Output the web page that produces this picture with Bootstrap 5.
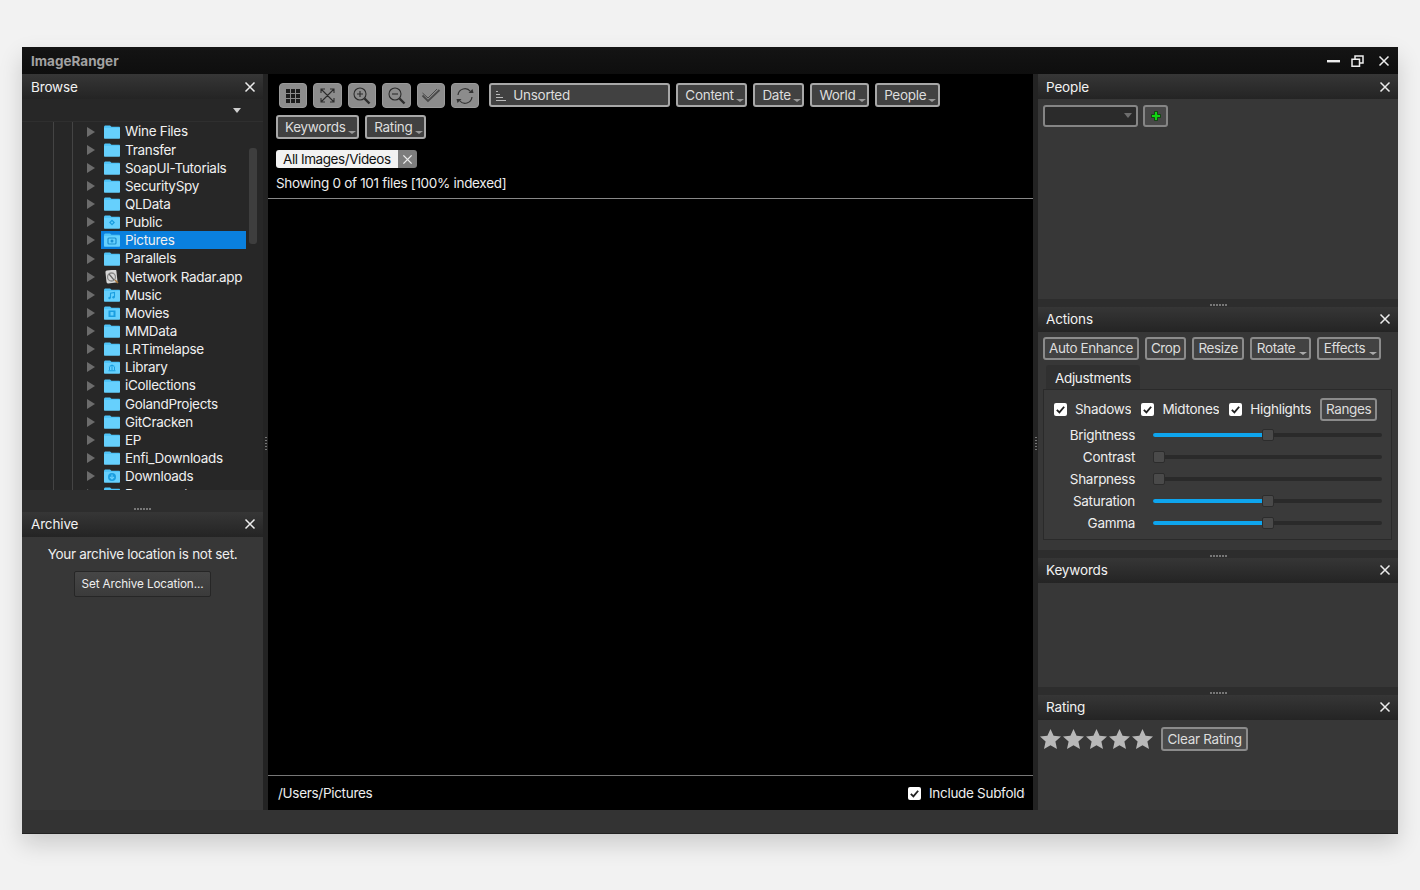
<!DOCTYPE html>
<html lang="en">
<head>
<meta charset="utf-8">
<title>ImageRanger</title>
<link href="https://cdn.jsdelivr.net/npm/bootstrap@5.3.0/dist/css/bootstrap.min.css" rel="stylesheet">
<style>
html,body{height:100%}
body{background:#f2f2f2;margin:0;padding:47px 22px 0;font-family:Inter,"Liberation Sans",sans-serif;font-size:13.5px;color:#eee;overflow:hidden;letter-spacing:-.3px}
.icon-defs{position:absolute}
.app-win{width:1376px;height:787px;background:#000;box-shadow:0 10px 22px rgba(0,0,0,.16);display:flex;flex-direction:column}
.title-bar{height:27px;flex:none;background:linear-gradient(#141414,#0e0e0e);display:flex;align-items:center;padding:1px 8px 0 9px;color:#a2a2a2;font-weight:700;font-size:13.5px;letter-spacing:0}
.win-btns{display:flex;gap:14px;align-items:center}
.win-min{margin-right:-3px}
.app-main{height:736px;flex:none;display:flex}
.side-l{width:241px;flex:none;display:flex;flex-direction:column;background:#2b2b2b}
.gut{width:5px;flex:none;background:#232323;display:flex;align-items:center;justify-content:center;padding-top:4px}
.gut-dots{width:2px;height:14px;background:repeating-linear-gradient(#777 0 1px,transparent 1px 3px)}
.center-col{width:765px;flex:none;background:#000;display:flex;flex-direction:column}
.side-r{width:360px;flex:none;display:flex;flex-direction:column;background:#2b2b2b}
.pan-head{height:25px;flex:none;background:linear-gradient(#363636,#242424);display:flex;align-items:center;justify-content:space-between;padding:1px 7px 0 9px;font-size:13.5px;color:#f2f2f2;letter-spacing:-.15px}
.pan-head-up{padding-top:0;padding-bottom:1px}
.side-r .pan-head{padding-left:8px}
.pan-body{background:#373737}
.split{height:8px;flex:none;display:flex;align-items:center;justify-content:center;background:#2d2d2d;padding-top:4px}
.split-left{height:7px;padding-top:0}
.split-dots{width:17px;height:2px;background:repeating-linear-gradient(90deg,#777 0 2px,transparent 2px 3px)}
.tree-top{height:23px;flex:none;background:#272727;border-bottom:1px solid #2f2f2f;display:flex;justify-content:flex-end;align-items:center;padding-right:22px}
.tree-wrap{height:368px;flex:none;overflow:hidden;position:relative;background:#272727}
.tree-rows{padding:.5px 0 0 65px;background:linear-gradient(#444,#444) 31px 0/1px 100% no-repeat,linear-gradient(#444,#444) 50px 0/1px 100% no-repeat}
.t-row{height:18.15px;display:flex;align-items:center;color:#f0f0f0;font-size:13.5px;white-space:nowrap;margin-right:17px}
.t-arrow{width:0;height:0;border-left:8px solid #6c6c6c;border-top:5px solid transparent;border-bottom:5px solid transparent;margin-right:9px;flex:none}
.t-icon{width:16px;height:14px;flex:none;margin-right:5px}
.t-name{display:flex;align-items:center;flex:1;height:18px;padding-left:3px;margin-left:-3px}
.t-sel{background:#0a80de}
.v-scroll{position:absolute;right:6px;top:26px;width:8px;height:96px;background:#3e3e3e;border-radius:3px}
.tree-foot{height:15px;flex:none;background:#2d2d2d}
.archive-body{flex:1;text-align:center;padding-top:8px;font-size:13.5px}
.archive-msg{line-height:18px;margin-bottom:8px}
.arch-btn{width:137px;height:26px;padding:0;font-size:11.7px;color:#eee;background:linear-gradient(#464646,#3b3b3b);border:1px solid #262626;border-radius:2px;line-height:24px;letter-spacing:-.1px}
.tool-row{display:flex;gap:6px;height:24px}
.tool-first{padding-left:3px}
.ico-btn{width:28.4px;height:25px;padding:0;background:#8c8c8c;border:1px solid #9b9b9b;border-radius:4px;display:flex;align-items:center;justify-content:center}
.fl-btn{height:24px;padding:0 11.7px 0 7px;position:relative;background:#414141;border:2px solid #a8a8a8;border-radius:3px;color:#ddd;font-size:13.5px;line-height:20px;white-space:nowrap;letter-spacing:-.3px}
.fl-btn::after{content:"";position:absolute;right:1.500px;bottom:3px;border-left:4px solid transparent;border-right:4px solid transparent;border-top:3.5px solid #9a9a9a}
.sort-box{width:181px;height:24px;padding:0 0 0 5px;margin-left:4px;background:#414141;border:2px solid #a8a8a8;border-radius:3px;display:flex;align-items:center;gap:7px;color:#ddd;font-size:13.5px}
.tag-pill{width:141px;height:18px;display:flex;border-radius:3px;overflow:hidden;font-size:13.5px;line-height:19px;margin-top:11px}
.tag-lab{width:122px;background:#f2f2f2;color:#111;padding-left:7px;white-space:nowrap;letter-spacing:-.42px}
.tag-x{width:19px;background:#7d7d7d;display:flex;align-items:center;justify-content:center}
.status-line{line-height:18px;margin-top:6px}
.view-top{height:125px;flex:none;border-bottom:1px solid #888;padding:9px 0 0 8px}
.view-main{flex:1}
.view-foot{height:35px;flex:none;border-top:1px solid #777;display:flex;align-items:center;justify-content:space-between;padding:0 8px 0 10px}
.ck-label{display:flex;align-items:center;gap:8px;white-space:nowrap;overflow:hidden}
.form-check-input.ck-box{width:13px;height:13px;margin:0;flex:none;border-radius:2px;background-color:#fff;border:0;background-size:11px;opacity:1;background-image:url("data:image/svg+xml,%3csvg xmlns='http://www.w3.org/2000/svg' viewBox='0 0 12 12'%3e%3cpath fill='none' stroke='%23222' stroke-width='2' d='M2 6.5l2.8 2.7L10 3'/%3e%3c/svg%3e")}
.sub-clip{width:96px;overflow:hidden;white-space:nowrap;display:block}
.act-row{display:flex;gap:6px}
.act-btn{height:23px;padding:0 4px;position:relative;background:#424242;border:2px solid #8b8b8b;border-radius:3px;color:#ddd;font-size:13.5px;line-height:19px;white-space:nowrap;letter-spacing:-.4px}
.act-drop{padding-right:13.5px;padding-left:5px}
.act-drop::after{content:"";position:absolute;right:2px;bottom:3px;border-left:4px solid transparent;border-right:4px solid transparent;border-top:3.5px solid #aaa}
.ppl-body{height:200px;padding:6px 5px;display:flex;gap:5px;align-items:flex-start}
.ppl-sel{width:95px;height:22px;background:#2b2b2b;border:2px solid #858585;border-radius:3px;position:relative}
.ppl-sel::after{content:"";position:absolute;right:4px;top:6px;border-left:4px solid transparent;border-right:4px solid transparent;border-top:5px solid #6e6e6e}
.add-btn{width:25px;height:22px;padding:0;background:#484848;border:2px solid #858585;border-radius:3px;display:flex;align-items:center;justify-content:center}
.actions-body{height:218px;padding:5px 0 0 5px}
.adj-tab{width:94px;height:25px;margin:5px 0 0 3px;background:#303030;border-radius:3px 3px 0 0;display:flex;align-items:center;justify-content:center;font-size:13.5px;color:#f2f2f2;padding-top:1px}
.adj-box{height:151px;margin:-1px 6px 0 0;background:#3a3a3a;border:1px solid #2a2a2a;padding:7px 0 0 10px}
.ck-row{display:flex;align-items:center;height:24px;gap:10px;margin-bottom:3px}
.range-btn{margin-left:-1px}
.sl-row{height:22px;display:flex;align-items:center}
.sl-lab{width:81px;text-align:right;flex:none;margin-right:18px;line-height:22px}
.sl-track{width:229px;height:4px;background:#2a2a2a;border-radius:2px;position:relative}
.sl-fill{height:4px;background:#0ea5ee;border-radius:2px}
.sl-thumb{position:absolute;top:-4px;width:12px;height:12px;background:#4a4a4a;border:1px solid #2c2c2c;border-radius:2px}
.kw-body{height:104px}
.rate-body{flex:1;display:flex;align-items:flex-start;padding:7px 0 0 2px}
.rate-stars{margin:2px 0 0 0;flex:none}
.clear-btn{height:24px;padding:0 4px 0 4.500px;margin-left:8px;background:#4a4a4a;border:2px solid #8b8b8b;border-radius:3px;color:#ddd;font-size:13.5px;line-height:20px;white-space:nowrap;letter-spacing:-.3px}
.status-strip{flex:1;background:#333;border-bottom:1px solid #222}
</style>
</head>
<body>
<svg width="0" height="0" class="icon-defs">
<defs>
<symbol id="fld" viewBox="0 0 16 14"><path fill="#4fc4f8" d="M0 2.2C0 1 .6.4 1.6.4h4c.8 0 1.1.7 1.800 1.300H15c.6 0 1 .4 1 1v1H0z"/><path fill="#66d0fd" d="M0 3h16v9.800c0 .6-.4 1-1 1H1c-.6 0-1-.4-1-1z"/></symbol>
<symbol id="xx" viewBox="0 0 12 12"><path stroke="#ececec" stroke-width="1.5" d="M1.500 1.500l9 9M10.500 1.500l-9 9"/></symbol>
<symbol id="star" viewBox="0 0 21 20"><path fill="#b8b8b8" d="M10.500 0l3.100 6.800 7.400.8-5.600 5 1.600 7.400-6.500-3.800L4 20l1.600-7.400-5.600-5 7.400-.8z"/></symbol>
</defs>
</svg>
<div class="app-win">
  <div class="title-bar justify-content-between">
    <span>ImageRanger</span>
    <div class="win-btns">
      <svg class="win-min" width="13" height="12" viewBox="0 0 13 12"><rect x="0" y="5" width="13" height="2.4" fill="#eee"/></svg>
      <svg width="13" height="12" viewBox="0 0 13 12"><path fill="none" stroke="#eee" stroke-width="1.5" d="M1 4.200h7.500v7H1zM4 4V1h8v7H8.500"/></svg>
      <svg width="12" height="12"><use href="#xx"/></svg>
    </div>
  </div>
  <div class="app-main">
    <div class="side-l">
      <div class="pan-head"><span>Browse</span><svg width="12" height="12"><use href="#xx"/></svg></div>
      <div class="tree-top"><svg width="8" height="5" viewBox="0 0 8 5"><path d="M0 0h8L4 5z" fill="#cfcfcf"/></svg></div>
      <div class="tree-wrap">
        <div class="tree-rows">
          <div class="t-row"><i class="t-arrow"></i><svg class="t-icon"><use href="#fld"/></svg><span class="t-name">Wine Files</span></div>
          <div class="t-row"><i class="t-arrow"></i><svg class="t-icon"><use href="#fld"/></svg><span class="t-name">Transfer</span></div>
          <div class="t-row"><i class="t-arrow"></i><svg class="t-icon"><use href="#fld"/></svg><span class="t-name">SoapUI-Tutorials</span></div>
          <div class="t-row"><i class="t-arrow"></i><svg class="t-icon"><use href="#fld"/></svg><span class="t-name">SecuritySpy</span></div>
          <div class="t-row"><i class="t-arrow"></i><svg class="t-icon"><use href="#fld"/></svg><span class="t-name">QLData</span></div>
          <div class="t-row"><i class="t-arrow"></i><svg class="t-icon" viewBox="0 0 16 14"><use href="#fld" width="16" height="14"/><path d="M8 4.500l3 3-3 3-3-3z" fill="#1a9ee0"/><circle cx="8" cy="7.500" r="1" fill="#66d0fd"/></svg><span class="t-name">Public</span></div>
          <div class="t-row"><i class="t-arrow"></i><div class="t-name t-sel"><svg class="t-icon" viewBox="0 0 16 14"><use href="#fld" width="16" height="14"/><rect x="4" y="5" width="8" height="6" rx="1" fill="none" stroke="#1a8fd0" stroke-width="1.2"/><circle cx="8" cy="8" r="1.500" fill="#1a8fd0"/></svg><span>Pictures</span></div></div>
          <div class="t-row"><i class="t-arrow"></i><svg class="t-icon"><use href="#fld"/></svg><span class="t-name">Parallels</span></div>
          <div class="t-row"><i class="t-arrow"></i><svg class="t-icon" viewBox="0 0 16 14"><rect x="2" y="0" width="11" height="13" rx="1.500" fill="#d8d8d8" transform="rotate(-6 8 7)"/><circle cx="7.500" cy="7" r="4" fill="none" stroke="#8a8a8a" stroke-width="1.3"/><path d="M5 4l5 6" stroke="#666" stroke-width="1.2"/><path d="M11 10l3 3" stroke="#a8763a" stroke-width="1.6"/></svg><span class="t-name">Network Radar.app</span></div>
          <div class="t-row"><i class="t-arrow"></i><svg class="t-icon" viewBox="0 0 16 14"><use href="#fld" width="16" height="14"/><path d="M6.500 10V5.200l4-.8V9" fill="none" stroke="#1a9ee0" stroke-width="1.1"/><circle cx="5.500" cy="10" r="1.200" fill="#1a9ee0"/><circle cx="9.500" cy="9.200" r="1.200" fill="#1a9ee0"/></svg><span class="t-name">Music</span></div>
          <div class="t-row"><i class="t-arrow"></i><svg class="t-icon" viewBox="0 0 16 14"><use href="#fld" width="16" height="14"/><rect x="4.500" y="4.500" width="7" height="6.500" fill="#1a9ee0"/><rect x="6.500" y="6" width="3" height="3.500" fill="#66d0fd"/></svg><span class="t-name">Movies</span></div>
          <div class="t-row"><i class="t-arrow"></i><svg class="t-icon"><use href="#fld"/></svg><span class="t-name">MMData</span></div>
          <div class="t-row"><i class="t-arrow"></i><svg class="t-icon"><use href="#fld"/></svg><span class="t-name">LRTimelapse</span></div>
          <div class="t-row"><i class="t-arrow"></i><svg class="t-icon" viewBox="0 0 16 14"><use href="#fld" width="16" height="14"/><path d="M4.500 6.500L8 4.500l3.500 2zM5 7h1v3H5zM7.500 7h1v3h-1zM10 7h1v3h-1zM4.500 10.300h7v.9h-7z" fill="#1a9ee0"/></svg><span class="t-name">Library</span></div>
          <div class="t-row"><i class="t-arrow"></i><svg class="t-icon"><use href="#fld"/></svg><span class="t-name">iCollections</span></div>
          <div class="t-row"><i class="t-arrow"></i><svg class="t-icon"><use href="#fld"/></svg><span class="t-name">GolandProjects</span></div>
          <div class="t-row"><i class="t-arrow"></i><svg class="t-icon"><use href="#fld"/></svg><span class="t-name">GitCracken</span></div>
          <div class="t-row"><i class="t-arrow"></i><svg class="t-icon"><use href="#fld"/></svg><span class="t-name">EP</span></div>
          <div class="t-row"><i class="t-arrow"></i><svg class="t-icon"><use href="#fld"/></svg><span class="t-name">Enfi_Downloads</span></div>
          <div class="t-row"><i class="t-arrow"></i><svg class="t-icon" viewBox="0 0 16 14"><use href="#fld" width="16" height="14"/><circle cx="8" cy="8" r="4" fill="#1a9ee0"/><path d="M8 5.500v4M6 8l2 2 2-2" fill="none" stroke="#66d0fd" stroke-width="1.1"/></svg><span class="t-name">Downloads</span></div>
          <div class="t-row"><i class="t-arrow"></i><svg class="t-icon"><use href="#fld"/></svg><span class="t-name">Documents</span></div>
        </div>
        <div class="v-scroll"></div>
      </div>
      <div class="tree-foot"></div>
      <div class="split split-left"><div class="split-dots"></div></div>
      <div class="pan-head pan-head-up"><span>Archive</span><svg width="12" height="12"><use href="#xx"/></svg></div>
      <div class="pan-body archive-body">
        <div class="archive-msg">Your archive location is not set.</div>
        <button type="button" class="btn arch-btn">Set Archive Location...</button>
      </div>
    </div>
    <div class="gut"><div class="gut-dots"></div></div>
    <div class="center-col">
      <div class="view-top">
        <div class="tool-row tool-first">
          <button type="button" class="btn ico-btn" aria-label="Grid"><svg width="16" height="16" viewBox="0 0 16 16" fill="#1c1c1c"><rect x="1" y="1" width="4" height="4"/><rect x="6" y="1" width="4" height="4"/><rect x="11" y="1" width="4" height="4"/><rect x="1" y="6" width="4" height="4"/><rect x="6" y="6" width="4" height="4"/><rect x="11" y="6" width="4" height="4"/><rect x="1" y="11" width="4" height="4"/><rect x="6" y="11" width="4" height="4"/><rect x="11" y="11" width="4" height="4"/></svg></button>
          <button type="button" class="btn ico-btn" aria-label="Fit"><svg width="17" height="17" viewBox="0 0 17 17" fill="none" stroke="#2c2c2c" stroke-width="1.1"><path d="M2 2l13 13M15 2L2 15M2 6V2h4M11 2h4v4M2 11v4h4M15 11v4h-4"/></svg></button>
          <button type="button" class="btn ico-btn" aria-label="Zoom in"><svg width="19" height="19" viewBox="0 0 19 19" fill="none" stroke="#2c2c2c" stroke-width="1.1"><circle cx="8" cy="8" r="6"/><path d="M8 5v6M5 8h6"/><path d="M12.500 12.500l5 5" stroke-width="2.4"/></svg></button>
          <button type="button" class="btn ico-btn" aria-label="Zoom out"><svg width="19" height="19" viewBox="0 0 19 19" fill="none" stroke="#2c2c2c" stroke-width="1.1"><circle cx="8" cy="8" r="6"/><path d="M5 8h6"/><path d="M12.500 12.500l5 5" stroke-width="2.4"/></svg></button>
          <button type="button" class="btn ico-btn" aria-label="Check"><svg width="20" height="15" viewBox="0 0 20 15" fill="none" stroke="#4a4a4a" stroke-width="1.8"><path d="M1.500 7.500l5.500 5.500L18.500 2"/><path d="M1.500 5l5.500 5L16 1" stroke="#4a4a4a" stroke-width="1"/></svg></button>
          <button type="button" class="btn ico-btn" aria-label="Refresh"><svg width="20" height="18" viewBox="0 0 20 18" fill="none" stroke="#333" stroke-width="1.2"><path d="M3 8a7 7 0 0 1 12.500-3.500M17 10a7 7 0 0 1-12.500 3.500"/><path fill="#333" stroke="none" d="M13.500 6h5l-1-4zM6.500 12h-5l1 4z"/></svg></button>
          <div class="sort-box"><svg width="10" height="11" viewBox="0 0 10 11" stroke="#bbb" stroke-width="1"><path d="M0 10.500h10M0 7.500h7M0 4.500h4M0 1.500h2"/></svg><span>Unsorted</span></div>
          <button type="button" class="btn fl-btn">Content</button>
          <button type="button" class="btn fl-btn">Date</button>
          <button type="button" class="btn fl-btn">World</button>
          <button type="button" class="btn fl-btn">People</button>
        </div>
        <div class="tool-row mt-2"><button type="button" class="btn fl-btn">Keywords</button><button type="button" class="btn fl-btn">Rating</button></div>
        <div class="tag-pill"><span class="tag-lab">All Images/Videos</span><span class="tag-x"><svg width="11" height="11"><use href="#xx"/></svg></span></div>
        <div class="status-line">Showing 0 of 101 files [100% indexed]</div>
      </div>
      <div class="view-main"></div>
      <div class="view-foot">
        <span>/Users/Pictures</span>
        <label class="ck-label"><input class="form-check-input ck-box" type="checkbox" checked><span class="sub-clip">Include Subfolders</span></label>
      </div>
    </div>
    <div class="gut"><div class="gut-dots"></div></div>
    <div class="side-r">
      <div class="pan-head"><span>People</span><svg width="12" height="12"><use href="#xx"/></svg></div>
      <div class="pan-body ppl-body"><div class="ppl-sel"></div><button type="button" class="btn add-btn" aria-label="Add"><svg width="10" height="10" viewBox="0 0 10 10"><path d="M3.500.5h3v3h3v3h-3v3h-3v-3h-3v-3h3z" fill="#12d412" stroke="#0b2a0b" stroke-width=".7"/></svg></button></div>
      <div class="split"><div class="split-dots"></div></div>
      <div class="pan-head pan-head-up"><span>Actions</span><svg width="12" height="12"><use href="#xx"/></svg></div>
      <div class="pan-body actions-body">
        <div class="act-row"><button type="button" class="btn act-btn">Auto Enhance</button><button type="button" class="btn act-btn">Crop</button><button type="button" class="btn act-btn">Resize</button><button type="button" class="btn act-btn act-drop">Rotate</button><button type="button" class="btn act-btn act-drop">Effects</button></div>
        <div class="adj-tab">Adjustments</div>
        <div class="adj-box">
          <div class="ck-row">
            <label class="ck-label"><input class="form-check-input ck-box" type="checkbox" checked>Shadows</label>
            <label class="ck-label"><input class="form-check-input ck-box" type="checkbox" checked>Midtones</label>
            <label class="ck-label"><input class="form-check-input ck-box" type="checkbox" checked>Highlights</label>
            <button type="button" class="btn act-btn range-btn">Ranges</button>
          </div>
          <div class="sl-row"><div class="sl-lab">Brightness</div><div class="sl-track"><div class="sl-fill" style="width:50%"></div><div class="sl-thumb" style="left:109px"></div></div></div>
          <div class="sl-row"><div class="sl-lab">Contrast</div><div class="sl-track"><div class="sl-thumb" style="left:0"></div></div></div>
          <div class="sl-row"><div class="sl-lab">Sharpness</div><div class="sl-track"><div class="sl-thumb" style="left:0"></div></div></div>
          <div class="sl-row"><div class="sl-lab">Saturation</div><div class="sl-track"><div class="sl-fill" style="width:50%"></div><div class="sl-thumb" style="left:109px"></div></div></div>
          <div class="sl-row"><div class="sl-lab">Gamma</div><div class="sl-track"><div class="sl-fill" style="width:50%"></div><div class="sl-thumb" style="left:109px"></div></div></div>
        </div>
      </div>
      <div class="split"><div class="split-dots"></div></div>
      <div class="pan-head pan-head-up"><span>Keywords</span><svg width="12" height="12"><use href="#xx"/></svg></div>
      <div class="pan-body kw-body"></div>
      <div class="split"><div class="split-dots"></div></div>
      <div class="pan-head pan-head-up"><span>Rating</span><svg width="12" height="12"><use href="#xx"/></svg></div>
      <div class="pan-body rate-body">
        <svg class="rate-stars" width="113" height="20" viewBox="0 0 113 20"><use href="#star" width="21" height="20"/><use href="#star" x="23" width="21" height="20"/><use href="#star" x="46" width="21" height="20"/><use href="#star" x="69" width="21" height="20"/><use href="#star" x="92" width="21" height="20"/></svg>
        <button type="button" class="btn clear-btn">Clear Rating</button>
      </div>
    </div>
  </div>
  <div class="status-strip"></div>
</div>
<script src="https://cdn.jsdelivr.net/npm/bootstrap@5.3.0/dist/js/bootstrap.bundle.min.js"></script>
</body>
</html>
